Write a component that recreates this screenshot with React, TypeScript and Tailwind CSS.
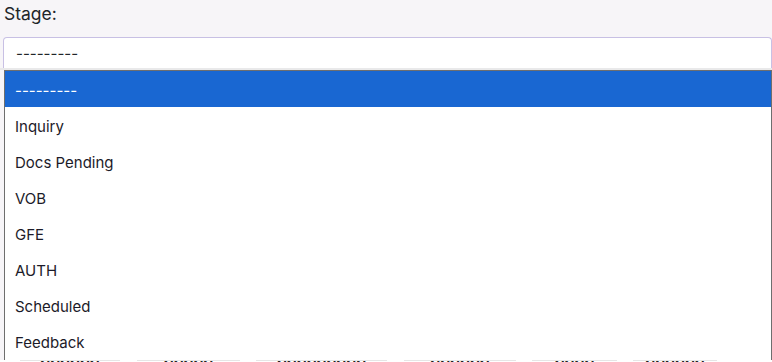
import React from "react";

const options = ["Inquiry", "Docs Pending", "VOB", "GFE", "AUTH", "Scheduled", "Feedback"];
const cells = [
  { l: 20, w: 100, t: "NNNNNN" },
  { l: 137, w: 103, t: "NNNNN" },
  { l: 256, w: 131, t: "NNNNNNNNN" },
  { l: 404, w: 112, t: "NNNNNN" },
  { l: 532, w: 85, t: "NNNN" },
  { l: 633, w: 84, t: "NNNNNN" },
];

export default function App() {
  return (
    <div
      className="w-[772px] h-[362px] overflow-hidden bg-[#f7f5f8] relative"
      style={{ fontFamily: "Inter, 'Noto Sans', sans-serif" }}
    >
      <div className="pl-[4px] pt-[2px] h-[37px] text-[17.5px] leading-[24px] text-[#212529]">Stage:</div>
      <div className="ml-[3px] h-[31px] bg-white border border-[#c8c0e4] border-b-0 rounded-t-[4px] flex items-center pl-[12px] pt-[2px] text-[15px] text-[#212529]">
        ---------
      </div>
      <div className="h-[2px] bg-[#e9e9ea]" />
      <div className="relative z-10 ml-[4px] h-[290px] bg-white border-x border-t border-[#6e6e6e] flex flex-col">
        <div className="h-[36px] bg-[#1967d2] text-white flex items-center pl-[10px] pt-[5px] text-[15px]">---------</div>
        {options.map((o) => (
          <div key={o} className="h-[36px] flex items-center pl-[10px] pt-[5px] text-[15px] text-[#1c1b29]">
            {o}
          </div>
        ))}
      </div>
      <div className="relative h-[10px] bg-white">
        {cells.map((c) => (
          <div
            key={c.l}
            className="absolute top-[0px] h-[10px] border-t border-[#e6e6e6] flex justify-center"
            style={{ left: c.l, width: c.w }}
          >
            <span className="text-[13px] leading-[10px] font-bold text-[#222] mt-[0px]">{c.t}</span>
          </div>
        ))}
      </div>
    </div>
  );
}
